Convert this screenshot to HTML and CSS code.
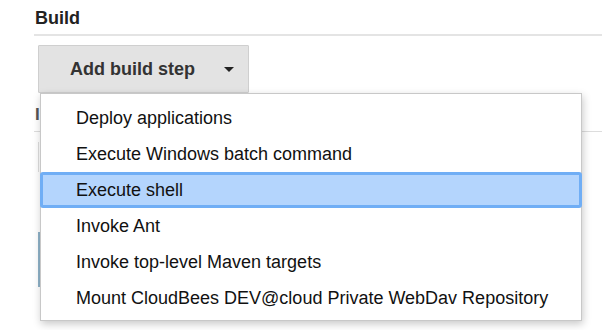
FILE: index.html
```html
<!DOCTYPE html>
<html lang="en">
  <head>
    <meta charset="UTF-8" />
    <title>Build</title>
    <link rel="stylesheet" href="styles.css">
  </head>
  <body>
    <div class="section">
      <div class="section-header">Build</div>

      <div class="step-box">
        <button class="add-step">
          <span>Add build step</span>
          <span class="caret"></span>
        </button>

        <ul class="menu">
          <li>Deploy applications</li>
          <li>Execute Windows batch command</li>
          <li class="active">Execute shell</li>
          <li>Invoke Ant</li>
          <li>Invoke top-level Maven targets</li>
          <li>Mount CloudBees DEV@cloud Private WebDav Repository</li>
        </ul>
      </div>

      <div class="section-header next">I</div>
      <div class="field faint"></div>
      <div class="field blue"></div>
    </div>
  </body>
</html>
```

FILE: styles.css
```css
body {
  font-family: "Liberation Sans", Arial, sans-serif;
  margin: 0;
  padding: 0;
  min-height: 330px;
  background-color: #fff;
  color: #222;
}
.section {
  padding: 8px 0 0 34px;
}
.section-header {
  font-size: 18px;
  font-weight: bold;
  line-height: 20px;
  padding: 0 0 6px 1px;
  border-bottom: 2px solid #e4e4e4;
}
.section-header.next {
  margin-top: 12px;
  color: #555;
  font-size: 17px;
  padding-bottom: 6px;
  border-bottom: 1px solid #ddd;
}
.step-box {
  position: relative;
  padding: 9px 0 0 4px;
}
.add-step {
  display: flex;
  align-items: center;
  gap: 29px;
  height: 48px;
  padding: 0 14px 0 31px;
  background-color: #e3e3e3;
  border: 1px solid #cfcfcf;
  border-radius: 1px;
  font-family: "Liberation Sans", Arial, sans-serif;
  font-size: 18px;
  font-weight: bold;
  color: #333;
  cursor: pointer;
}
.caret {
  width: 0;
  height: 0;
  border-left: 5px solid transparent;
  border-right: 5px solid transparent;
  border-top: 5px solid #222;
}
.menu {
  position: absolute;
  top: 57px;
  left: 6px;
  width: 540px;
  margin: 0;
  padding: 6px 0 4px;
  list-style: none;
  background-color: #fff;
  border: 1px solid #c8c8c8;
  box-shadow: 1px 3px 8px rgba(0, 0, 0, 0.22);
  z-index: 2;
}
.menu li {
  height: 34px;
  line-height: 34px;
  padding-left: 34px;
  font-size: 18px;
  color: #111;
  border: 1px solid transparent;
  white-space: nowrap;
}
.menu li.active {
  margin: 0 -1px;
  padding-left: 33px;
  background-color: #b4d5fd;
  border: 3px solid #70aef5;
  border-radius: 3px;
  height: 30px;
  line-height: 30px;
}
.field {
  margin: 10px 0 0 4px;
  width: 200px;
  border-left: 1px solid #ddd;
}
.field.faint {
  height: 30px;
}
.field.blue {
  margin-top: 60px;
  height: 55px;
  border-left: 2px solid #8fb2c8;
}
```
